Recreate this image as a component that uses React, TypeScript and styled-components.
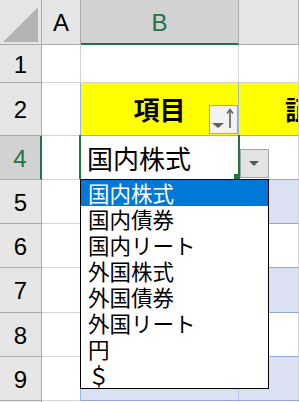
import React from 'react';
import styled, { createGlobalStyle } from 'styled-components';

const GREEN = '#217346';
const GRID = '#d4d4d4';
const HEAD_LINE = '#ababab';
const TABLE_LINE = '#8ea9db';
const BAND = '#d9e1f2';

const GlobalStyle = createGlobalStyle`
  html, body {
    margin: 0;
    padding: 0;
    background: #fff;
    overflow: hidden;
  }
  body {
    font-family: "Liberation Sans", Arial, sans-serif;
  }
  * {
    box-sizing: border-box;
  }
`;

const Sheet = styled.div`
  display: grid;
  grid-template-columns: 42px 39px 158px 1fr;
  grid-template-rows: 45px 38px 53px 44px 44px 44px 45px 44px 44px 44px;
  width: 299px;
  height: 402px;
  overflow: hidden;
`;

const Corner = styled.div`
  background: #e6e6e6;
  border-right: 1px solid ${HEAD_LINE};
  border-bottom: 1px solid ${HEAD_LINE};
  display: flex;
  align-items: flex-end;
  justify-content: flex-end;
  padding: 0 3px 2px 0;
`;

const HeadCell = styled.div<{ $active?: boolean; $col?: boolean }>`
  display: flex;
  align-items: center;
  justify-content: center;
  font-size: 24px;
  background: ${({ $active }) => ($active ? '#d2d2d2' : '#e6e6e6')};
  color: ${({ $active }) => ($active ? GREEN : '#000')};
  border-right: ${({ $active, $col }) =>
    $active && !$col ? `2px solid ${GREEN}` : `1px solid ${HEAD_LINE}`};
  border-bottom: ${({ $active, $col }) =>
    $active && $col ? `2px solid ${GREEN}` : `1px solid ${HEAD_LINE}`};
  padding-top: 2px;
`;

const Cell = styled.div<{ $bg?: string; $right?: string; $bottom?: string }>`
  display: flex;
  align-items: center;
  min-width: 0;
  background: ${({ $bg }) => $bg ?? '#fff'};
  border-right: 1px solid ${({ $right }) => $right ?? GRID};
  border-bottom: 1px solid ${({ $bottom }) => $bottom ?? GRID};
  font-family: "Noto Sans CJK JP", sans-serif;
`;

const TitleCell = styled(Cell)<{ $center?: boolean }>`
  position: relative;
  justify-content: ${({ $center }) => ($center ? 'center' : 'flex-start')};
  padding-left: ${({ $center }) => ($center ? '0' : '46px')};
  white-space: nowrap;
  overflow: hidden;
`;

const Title = styled.span`
  font-size: 26px;
  font-weight: 700;
  line-height: 1;
  color: #000;
`;

const FilterButton = styled.div`
  position: absolute;
  right: 0;
  bottom: 1px;
  width: 29px;
  height: 29px;
  background: #f2f2f2;
  border: 1px solid #a6a6a6;
`;

const ActiveCell = styled(Cell)`
  position: relative;
  z-index: 3;
  padding-left: 6px;
  font-size: 26px;
  line-height: 1;
  white-space: nowrap;
`;

const SelectionFrame = styled.div`
  position: absolute;
  top: -1px;
  bottom: 0;
  left: -2px;
  right: -2px;
  border-left: 2px solid ${GREEN};
  border-right: 2px solid ${GREEN};
  pointer-events: none;
`;

const FillHandle = styled.div`
  position: absolute;
  right: -2px;
  bottom: -1px;
  width: 6px;
  height: 6px;
  background: ${GREEN};
`;

const DropButton = styled.div`
  position: absolute;
  left: 159px;
  top: 13px;
  width: 29px;
  height: 29px;
  background: #e3e3e3;
  border: 1px solid #a3a3a3;
`;

const ListBox = styled.ul`
  position: absolute;
  left: -1px;
  top: 43px;
  width: 189px;
  height: 210px;
  margin: 0;
  padding: 0;
  list-style: none;
  background: #fff;
  border: 1px solid #000;
  z-index: 4;
`;

const ListItem = styled.li<{ $selected?: boolean }>`
  height: 26px;
  padding-left: 7px;
  font-size: 21.5px;
  line-height: 25px;
  white-space: nowrap;
  background: ${({ $selected }) => ($selected ? '#0078d7' : 'transparent')};
  color: ${({ $selected }) => ($selected ? '#fff' : '#000')};
`;

const options = ['国内株式', '国内債券', '国内リート', '外国株式', '外国債券', '外国リート', '円', '＄'];

const bodyRows = ['5', '6', '7', '8', '9', ''];

const CornerMark = () => (
  <svg width="35" height="35" viewBox="0 0 35 35">
    <polygon points="0,35 35,0 35,35" fill="#b4b4b4" />
  </svg>
);

const FilterIcon = () => (
  <svg width="27" height="27" viewBox="0 0 27 27">
    <polygon points="2,17 14,17 8,22" fill="#5f5f5f" />
    <line x1="20" y1="4" x2="20" y2="22" stroke="#5f5f5f" strokeWidth="1.6" />
    <polyline points="17,7.5 20,3.5 23,7.5" fill="none" stroke="#5f5f5f" strokeWidth="1.4" />
  </svg>
);

const DropIcon = () => (
  <svg width="27" height="27" viewBox="0 0 27 27">
    <polygon points="8,11 18,11 13,16" fill="#555" />
  </svg>
);

export default function App() {
  return (
    <>
      <GlobalStyle />
      <Sheet>
        {/* column headers */}
        <Corner>
          <CornerMark />
        </Corner>
        <HeadCell>A</HeadCell>
        <HeadCell $active $col>B</HeadCell>
        <HeadCell />

        {/* row 1 */}
        <HeadCell>1</HeadCell>
        <Cell />
        <Cell />
        <Cell />

        {/* row 2 */}
        <HeadCell>2</HeadCell>
        <Cell $right="#9bb4e0" />
        <TitleCell $center $bg="#ffff00" $right="#9bb4e0" $bottom="#a9a9a9">
          <Title>項目</Title>
          <FilterButton>
            <FilterIcon />
          </FilterButton>
        </TitleCell>
        <TitleCell $bg="#ffff00" $bottom="#a9a9a9">
          <Title>証券会社</Title>
        </TitleCell>

        {/* row 4 */}
        <HeadCell $active>4</HeadCell>
        <Cell $right="#9bb4e0" />
        <ActiveCell $bottom={TABLE_LINE}>
          国内株式
          <SelectionFrame>
            <FillHandle />
          </SelectionFrame>
          <DropButton>
            <DropIcon />
          </DropButton>
          <ListBox>
            {options.map((o, i) => (
              <ListItem key={o} $selected={i === 0}>
                {o}
              </ListItem>
            ))}
          </ListBox>
        </ActiveCell>
        <Cell $bottom={TABLE_LINE} />

        {bodyRows.map((n, i) => {
          const inTable = n !== '';
          const band = inTable && Number(n) % 2 === 1;
          const bg = band ? BAND : '#fff';
          const line = inTable ? TABLE_LINE : GRID;
          return (
            <React.Fragment key={i}>
              <HeadCell>{n}</HeadCell>
              <Cell $right={inTable ? '#9bb4e0' : GRID} />
              <Cell $bg={bg} $bottom={line} $right={inTable ? '#b4c6e7' : GRID} />
              <Cell $bg={bg} $bottom={line} />
            </React.Fragment>
          );
        })}
      </Sheet>
    </>
  );
}
